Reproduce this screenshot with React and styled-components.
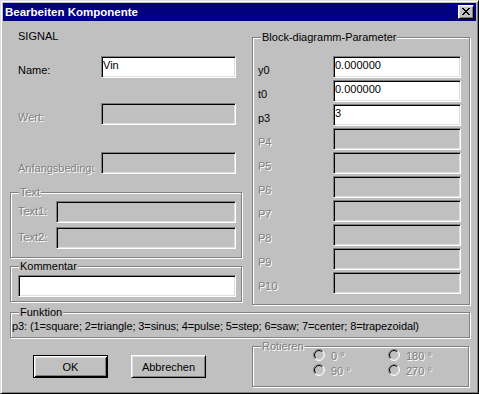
import React from 'react';
import styled, { createGlobalStyle, css } from 'styled-components';

const GlobalStyle = createGlobalStyle`
  html, body { margin: 0; padding: 0; background: #c0c0c0; }
  body { font-family: "Liberation Sans", Arial, sans-serif; font-size: 11px; }
  *, *::before, *::after { box-sizing: border-box; }
`;

const disabledText = css`
  color: #808080;
  text-shadow: 1px 1px 0 #fff;
`;

const Window = styled.div`
  width: 479px;
  height: 394px;
  border: 1px solid;
  border-color: #dfdfdf #000 #000 #dfdfdf;
  box-shadow: inset 1px 1px 0 #fff, inset -1px -1px 0 #808080;
  padding: 2px;
  background: #c0c0c0;
  display: flex;
  flex-direction: column;
  font-family: "Liberation Sans", Arial, sans-serif;
  font-size: 11px;
  line-height: 13px;
  color: #000;
`;

const TitleBar = styled.div`
  height: 18px;
  flex: none;
  background: #000080;
  display: flex;
  align-items: center;
  justify-content: space-between;
  padding: 0 2px;
`;

const TitleText = styled.span`
  color: #fff;
  font-weight: bold;
  font-size: 11.5px;
  line-height: 14px;
  white-space: nowrap;
`;

const CloseButton = styled.button`
  width: 16px;
  height: 14px;
  padding: 0;
  margin: 0;
  border: 1px solid;
  border-color: #fff #000 #000 #fff;
  box-shadow: inset 1px 1px 0 #dfdfdf, inset -1px -1px 0 #808080;
  background: #c0c0c0;
  display: flex;
  align-items: center;
  justify-content: center;
  padding-bottom: 1px;
`;

const Body = styled.div`
  flex: 1;
  padding: 9px 6px 0 7px;
  display: flex;
  flex-direction: column;
`;

const Top = styled.div`
  display: grid;
  grid-template-columns: 233px 218px;
  column-gap: 9px;
  align-items: start;
`;

const LeftCol = styled.div`
  display: flex;
  flex-direction: column;
`;

const Caption = styled.div`
  padding-left: 8px;
  height: 13px;
`;

const FieldRow = styled.div`
  display: grid;
  grid-template-columns: ${(p) => p.$cols};
  margin-top: ${(p) => p.$mt || 0}px;
  padding-left: ${(p) => p.$pl || 0}px;
`;

const Label = styled.span`
  padding-top: ${(p) => (p.$offset ?? 8)}px;
  white-space: nowrap;
  overflow: hidden;
  ${(p) => p.$clip && `max-width: ${p.$clip}px;`}
  ${(p) => p.$disabled && disabledText}
`;

const Edit = styled.input`
  display: block;
  width: 100%;
  height: 22px;
  margin: 0;
  border: 1px solid;
  border-color: #808080 #fff #fff #808080;
  box-shadow: inset 1px 1px 0 #000, inset -1px -1px 0 #dfdfdf;
  background: ${(p) => (p.disabled ? '#c0c0c0' : '#fff')};
  font-family: inherit;
  font-size: 11px;
  line-height: 13px;
  color: #000;
  padding: 0 1px 5px 1px;
  outline: none;
  border-radius: 0;
`;

const Group = styled.div`
  position: relative;
  border: 1px solid #808080;
  box-shadow: inset 1px 1px 0 #fff, 1px 1px 0 #fff;
  margin-top: ${(p) => p.$mt || 0}px;
  padding: ${(p) => p.$pad};
  ${(p) => p.$width && `width: ${p.$width}px;`}
  ${(p) => p.$mr && `margin-right: ${p.$mr}px;`}
`;

const Legend = styled.span`
  position: absolute;
  top: -7px;
  left: 8px;
  padding: 0 1px;
  background: #c0c0c0;
  line-height: 13px;
  white-space: nowrap;
  ${(p) => p.$disabled && disabledText}
`;

const InfoText = styled.div`
  white-space: nowrap;
  line-height: 13px;
  letter-spacing: -0.1px;
`;

const BottomRow = styled.div`
  display: flex;
  justify-content: space-between;
  align-items: flex-start;
  margin-top: 8px;
`;

const Buttons = styled.div`
  display: flex;
  gap: 23px;
  padding: 9px 0 0 23px;
`;

const Button = styled.button`
  width: 75px;
  height: 23px;
  margin: 0;
  padding: 0;
  background: #c0c0c0;
  font-family: inherit;
  font-size: 11px;
  color: #000;
  border-radius: 0;
  ${(p) =>
    p.$default
      ? css`
          border: 1px solid #000;
          box-shadow: inset 1px 1px 0 #fff, inset -1px -1px 0 #000,
            inset 2px 2px 0 #dfdfdf, inset -2px -2px 0 #808080;
        `
      : css`
          border: 1px solid;
          border-color: #fff #000 #000 #fff;
          box-shadow: inset 1px 1px 0 #dfdfdf, inset -1px -1px 0 #808080;
        `}
`;

const RadioGrid = styled.div`
  display: grid;
  grid-template-columns: 75px 75px;
  grid-auto-rows: 15px;
`;

const RadioItem = styled.label`
  display: flex;
  align-items: flex-start;
  gap: 6px;
`;

const RadioText = styled.span`
  padding-top: 1px;
  white-space: nowrap;
  ${disabledText}
`;

const CloseGlyph = () => (
  <svg width="8" height="7" viewBox="0 0 8 7" shapeRendering="crispEdges">
    <g fill="#000">
      <rect x="0" y="0" width="2" height="1" />
      <rect x="6" y="0" width="2" height="1" />
      <rect x="1" y="1" width="2" height="1" />
      <rect x="5" y="1" width="2" height="1" />
      <rect x="2" y="2" width="4" height="1" />
      <rect x="3" y="3" width="2" height="1" />
      <rect x="2" y="4" width="4" height="1" />
      <rect x="1" y="5" width="2" height="1" />
      <rect x="5" y="5" width="2" height="1" />
      <rect x="0" y="6" width="2" height="1" />
      <rect x="6" y="6" width="2" height="1" />
    </g>
  </svg>
);

const arc = (r, first) => {
  const d = r * Math.SQRT1_2;
  const bl = [6 - d, 6 + d];
  const tr = [6 + d, 6 - d];
  const [a, b] = first ? [bl, tr] : [tr, bl];
  return `M${a[0]} ${a[1]} A${r} ${r} 0 0 1 ${b[0]} ${b[1]}`;
};

const RadioIcon = () => (
  <svg width="12" height="12" viewBox="0 0 12 12">
    <circle cx="6" cy="6" r="4" fill="#c0c0c0" />
    <path d={arc(5.5, true)} stroke="#808080" fill="none" strokeWidth="1" />
    <path d={arc(5.5, false)} stroke="#fff" fill="none" strokeWidth="1" />
    <path d={arc(4.5, true)} stroke="#000" fill="none" strokeWidth="1" />
    <path d={arc(4.5, false)} stroke="#dfdfdf" fill="none" strokeWidth="1" />
  </svg>
);

const Radio = ({ label }) => (
  <RadioItem>
    <RadioIcon />
    <RadioText>{label}</RadioText>
  </RadioItem>
);

const params = [
  { name: 'y0', value: '0.000000' },
  { name: 't0', value: '0.000000' },
  { name: 'p3', value: '3' },
  { name: 'P4', disabled: true },
  { name: 'P5', disabled: true },
  { name: 'P6', disabled: true },
  { name: 'P7', disabled: true },
  { name: 'P8', disabled: true },
  { name: 'P9', disabled: true },
  { name: 'P10', disabled: true },
];

export default function App() {
  return (
    <>
      <GlobalStyle />
      <Window>
        <TitleBar>
          <TitleText>Bearbeiten Komponente</TitleText>
          <CloseButton aria-label="Schließen">
            <CloseGlyph />
          </CloseButton>
        </TitleBar>
        <Body>
          <Top>
            <LeftCol>
              <Caption>SIGNAL</Caption>
              <FieldRow $cols="83px 135px" $mt={13} $pl={8}>
                <Label>Name:</Label>
                <Edit defaultValue="Vin" />
              </FieldRow>
              <FieldRow $cols="83px 135px" $mt={25} $pl={8}>
                <Label $disabled>Wert:</Label>
                <Edit disabled />
              </FieldRow>
              <FieldRow $cols="83px 135px" $mt={27} $pl={8}>
                <Label $disabled $offset={10} $clip={77}>
                  Anfangsbedingung:
                </Label>
                <Edit disabled />
              </FieldRow>
              <Group $mt={17} $pad="8px 5px 8px 7px" $width={232}>
                <Legend $disabled>Text</Legend>
                <FieldRow $cols="38px 180px">
                  <Label $disabled $offset={4}>Text1:</Label>
                  <Edit disabled />
                </FieldRow>
                <FieldRow $cols="38px 180px" $mt={4}>
                  <Label $disabled $offset={4}>Text2:</Label>
                  <Edit disabled />
                </FieldRow>
              </Group>
              <Group $mt={8} $pad="8px 5px 4px 7px" $width={232}>
                <Legend>Kommentar</Legend>
                <Edit />
              </Group>
            </LeftCol>
            <Group $mt={7} $pad="18px 8px 10px 5px">
              <Legend>Block-diagramm-Parameter</Legend>
              {params.map((p, i) => (
                <FieldRow key={p.name} $cols="75px 128px" $mt={i === 0 ? 0 : 2}>
                  <Label $disabled={p.disabled}>{p.name}</Label>
                  <Edit disabled={p.disabled} defaultValue={p.value || ''} />
                </FieldRow>
              ))}
            </Group>
          </Top>
          <Group $mt={7} $pad="7px 1px 4px 1px">
            <Legend>Funktion</Legend>
            <InfoText>
              p3: (1=square; 2=triangle; 3=sinus; 4=pulse; 5=step; 6=saw; 7=center; 8=trapezoidal)
            </InfoText>
          </Group>
          <BottomRow>
            <Buttons>
              <Button $default>OK</Button>
              <Button>Abbrechen</Button>
            </Buttons>
            <Group $pad="2px 0 7px 60px" $width={217} $mr={1}>
              <Legend $disabled>Rotieren</Legend>
              <RadioGrid>
                <Radio label="0 °" />
                <Radio label="180 °" />
                <Radio label="90 °" />
                <Radio label="270 °" />
              </RadioGrid>
            </Group>
          </BottomRow>
        </Body>
      </Window>
    </>
  );
}
